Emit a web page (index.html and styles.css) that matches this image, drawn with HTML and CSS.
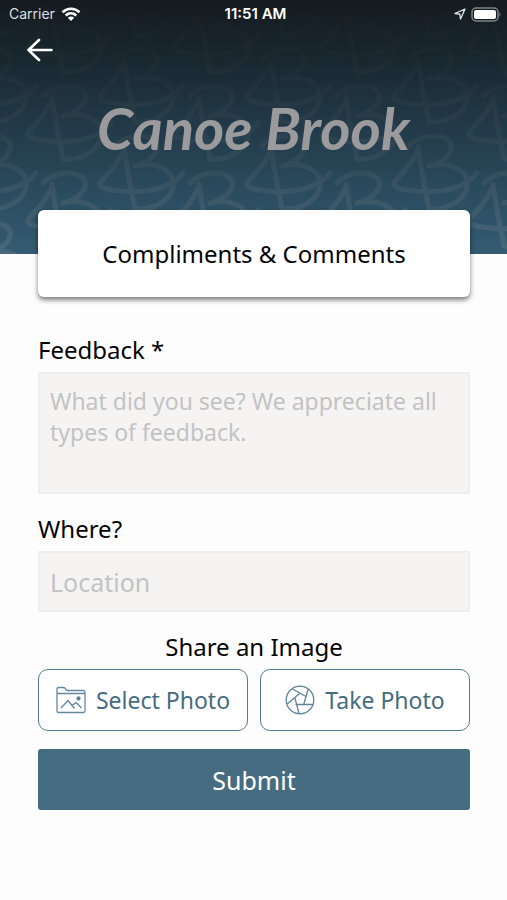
FILE: index.html
```html
<!DOCTYPE html>
<html lang="en">
<head>
<meta charset="utf-8">
<meta name="viewport" content="width=device-width, initial-scale=1">
<title>Compliments &amp; Comments</title>
<link rel="stylesheet" href="styles.css">
</head>
<body>
<header class="hero">
  <svg class="hero-art" aria-hidden="true">
    <defs>
      <linearGradient id="shade" x1="0" y1="0" x2="0" y2="1">
        <stop offset="0" stop-color="#12171b" stop-opacity=".95"/>
        <stop offset=".25" stop-color="#12191e" stop-opacity=".78"/>
        <stop offset=".6" stop-color="#142029" stop-opacity=".46"/>
        <stop offset="1" stop-color="#142029" stop-opacity="0"/>
      </linearGradient>
      <g id="motif" fill="none" stroke="#6b818c" stroke-opacity=".36" stroke-width="5" stroke-linecap="round" stroke-linejoin="round">
        <path d="M27 10C30 32 34 52 38 72M18 9C30-4 56-4 60 7C63 18 48 27 38 29C60 24 79 34 76 50C74 63 55 74 38 72M27 12C21 30 7 39 3 46C0 53 30 56 48 54C66 52 78 46 86 36"/>
      </g>
      <pattern id="texture" width="147" height="87" patternUnits="userSpaceOnUse">
        <use href="#motif" x="97" y="50"/>
        <use href="#motif" x="97" y="-37"/>
        <use href="#motif" x="-50" y="50"/>
        <use href="#motif" x="-50" y="-37"/>
        <use href="#motif" x="25" y="87"/>
        <use href="#motif" x="25" y="0"/>
      </pattern>
    </defs>
    <rect width="100%" height="100%" fill="#345c73"/>
    <rect width="100%" height="100%" fill="url(#texture)"/>
    <rect width="100%" height="100%" fill="url(#shade)"/>
  </svg>
  <div class="status">
    <span class="carrier">Carrier
      <svg width="20" height="14" viewBox="0 0 20 14" fill="none" stroke="#fff" stroke-width="2.6" aria-hidden="true"><path d="M1.5 5.2C6.5.5 13.5.5 18.5 5.2M4.7 8.5C7.8 5.7 12.2 5.7 15.3 8.5"/><path d="M10 14L6.8 10.8C8.7 9.2 11.3 9.2 13.2 10.8Z" fill="#fff" stroke="none"/></svg>
    </span>
    <time class="clock">11:51 AM</time>
    <span class="indicators">
      <svg width="12" height="12" viewBox="0 0 12 12" fill="none" stroke="#e6e8e9" stroke-width="1.3" stroke-linejoin="round" aria-hidden="true"><path d="M11 1L1 5.5L5.8 6.2L6.5 11Z"/></svg>
      <svg width="31" height="15" viewBox="0 0 31 15" aria-hidden="true"><rect x="1" y="1" width="26" height="13" rx="4" fill="none" stroke="#7c8488" stroke-width="1.5"/><rect x="3" y="3" width="22" height="9" rx="2" fill="#fff"/><path d="M28.5 5Q30.5 7.5 28.5 10Z" fill="#7c8488"/></svg>
    </span>
  </div>
  <button class="back" type="button" aria-label="Back">
    <svg width="26" height="24" viewBox="0 0 26 24" fill="none" stroke="#fff" stroke-width="2.6" stroke-linecap="round" stroke-linejoin="round" aria-hidden="true"><path d="M24.5 12H1.5M12 2L1.5 12L12 22"/></svg>
  </button>
  <div class="brand">Canoe Brook</div>
</header>
<main class="content">
  <h1 class="title-card">Compliments &amp; Comments</h1>
  <form class="form">
    <label for="feedback">Feedback *</label>
    <textarea id="feedback" placeholder="What did you see? We appreciate all types of feedback." required></textarea>
    <label for="where">Where?</label>
    <input id="where" type="text" placeholder="Location">
    <h2 class="share">Share an Image</h2>
    <div class="photo-row">
      <button class="photo" type="button">
        <svg width="30" height="28" viewBox="0 0 30 28" fill="none" stroke="#6588a0" stroke-width="1.3" stroke-linejoin="round" aria-hidden="true"><path d="M1 7V3Q1 1.5 2.5 1.5H7.5Q9 1.5 9.5 3T11.5 4.5H27Q29 4.5 29 6.5V25Q29 26.5 27.5 26.5H2.5Q1 26.5 1 25ZM1 7.5H29M5 22L12 14.5L18.5 22.5M16 19.5L20 16.5L25.5 22"/><circle cx="22.5" cy="12.5" r="1.5" fill="#456c7e"/></svg>
        Select Photo
      </button>
      <button class="photo" type="button">
        <svg width="30" height="30" viewBox="0 0 30 30" fill="none" stroke="#5f8496" stroke-width="1.3" stroke-linejoin="round" aria-hidden="true"><circle cx="15" cy="15" r="13.8"/><path d="M7 3.7L20.5 11.2M23.2 4L18.7 19.5M28 19.5H10.5M14 28.5L9.7 12.2M2.2 19L14.8 8.2"/></svg>
        Take Photo
      </button>
    </div>
    <button class="submit" type="submit">Submit</button>
  </form>
</main>
</body>
</html>
```
FILE: styles.css
```css
* { box-sizing: border-box; }

body {
  margin: 0;
  min-height: 100vh;
  background: #fdfdfd;
  color: #050505;
  font-family: "Noto Sans", "Open Sans", sans-serif;
  font-size: 24px;
  line-height: 32px;
}

button, input, textarea { font: inherit; }

.hero {
  position: relative;
  height: 254px;
  color: #fff;
  isolation: isolate;
}

.hero-art {
  position: absolute;
  inset: 0;
  z-index: -1;
  width: 100%;
  height: 100%;
}

.status {
  display: grid;
  grid-template-columns: 1fr auto 1fr;
  align-items: center;
  height: 28px;
  padding: 0 5px 0 9px;
  font-family: Inter, sans-serif;
  font-size: 14px;
  line-height: 16px;
}

.carrier {
  display: flex;
  align-items: center;
  gap: 6px;
  color: #dcdfe0;
}

.clock {
  font-size: 15px;
  font-weight: 600;
}

.indicators {
  display: flex;
  align-items: center;
  justify-content: flex-end;
  gap: 5px;
}

.back {
  display: flex;
  margin: 10px 0 0 27px;
  padding: 0;
  border: 0;
  background: none;
}

.brand {
  margin-top: 30px;
  color: #9b9b9d;
  font-family: Lato, sans-serif;
  font-size: 58px;
  font-style: italic;
  font-weight: 700;
  line-height: 72px;
  text-align: center;
}

.content {
  position: relative;
  margin-top: -44px;
  padding: 0 37px 32px 38px;
}

.title-card {
  margin: 0;
  padding: 28px 12px 27px;
  border-radius: 6px;
  background: #fff;
  box-shadow: 0 3px 5px rgba(0, 0, 0, .5);
  font-size: 24px;
  font-weight: 400;
  line-height: 32px;
  text-align: center;
}

.form {
  display: flex;
  flex-direction: column;
  margin-top: 37px;
}

.form label { margin-bottom: 6px; }

.form textarea,
.form input {
  width: 100%;
  margin: 0 0 19px;
  padding: 12px 10px;
  border: 2px solid #eeeeee;
  border-radius: 0;
  background: #f5f4f2;
  color: #050505;
  resize: none;
}

.form textarea {
  height: 122px;
  font-size: 23px;
  line-height: 31px;
}

.form input {
  height: 61px;
  font-size: 25px;
}

::placeholder {
  color: #c2c3c5;
  opacity: 1;
}

.share {
  margin: 0 0 6px;
  font-size: 24px;
  font-weight: 400;
  text-align: center;
}

.photo-row {
  display: grid;
  grid-template-columns: 1fr 1fr;
  gap: 12px;
}

.photo {
  display: flex;
  align-items: center;
  justify-content: center;
  gap: 10px;
  height: 62px;
  padding: 0;
  border: 1px solid #53798c;
  border-radius: 10px;
  background: #fff;
  color: #456c7f;
  font-size: 23px;
  white-space: nowrap;
}

.submit {
  height: 61px;
  margin-top: 18px;
  border: 0;
  border-radius: 3px;
  background: #456c80;
  color: #fff;
  font-size: 25px;
}
```
